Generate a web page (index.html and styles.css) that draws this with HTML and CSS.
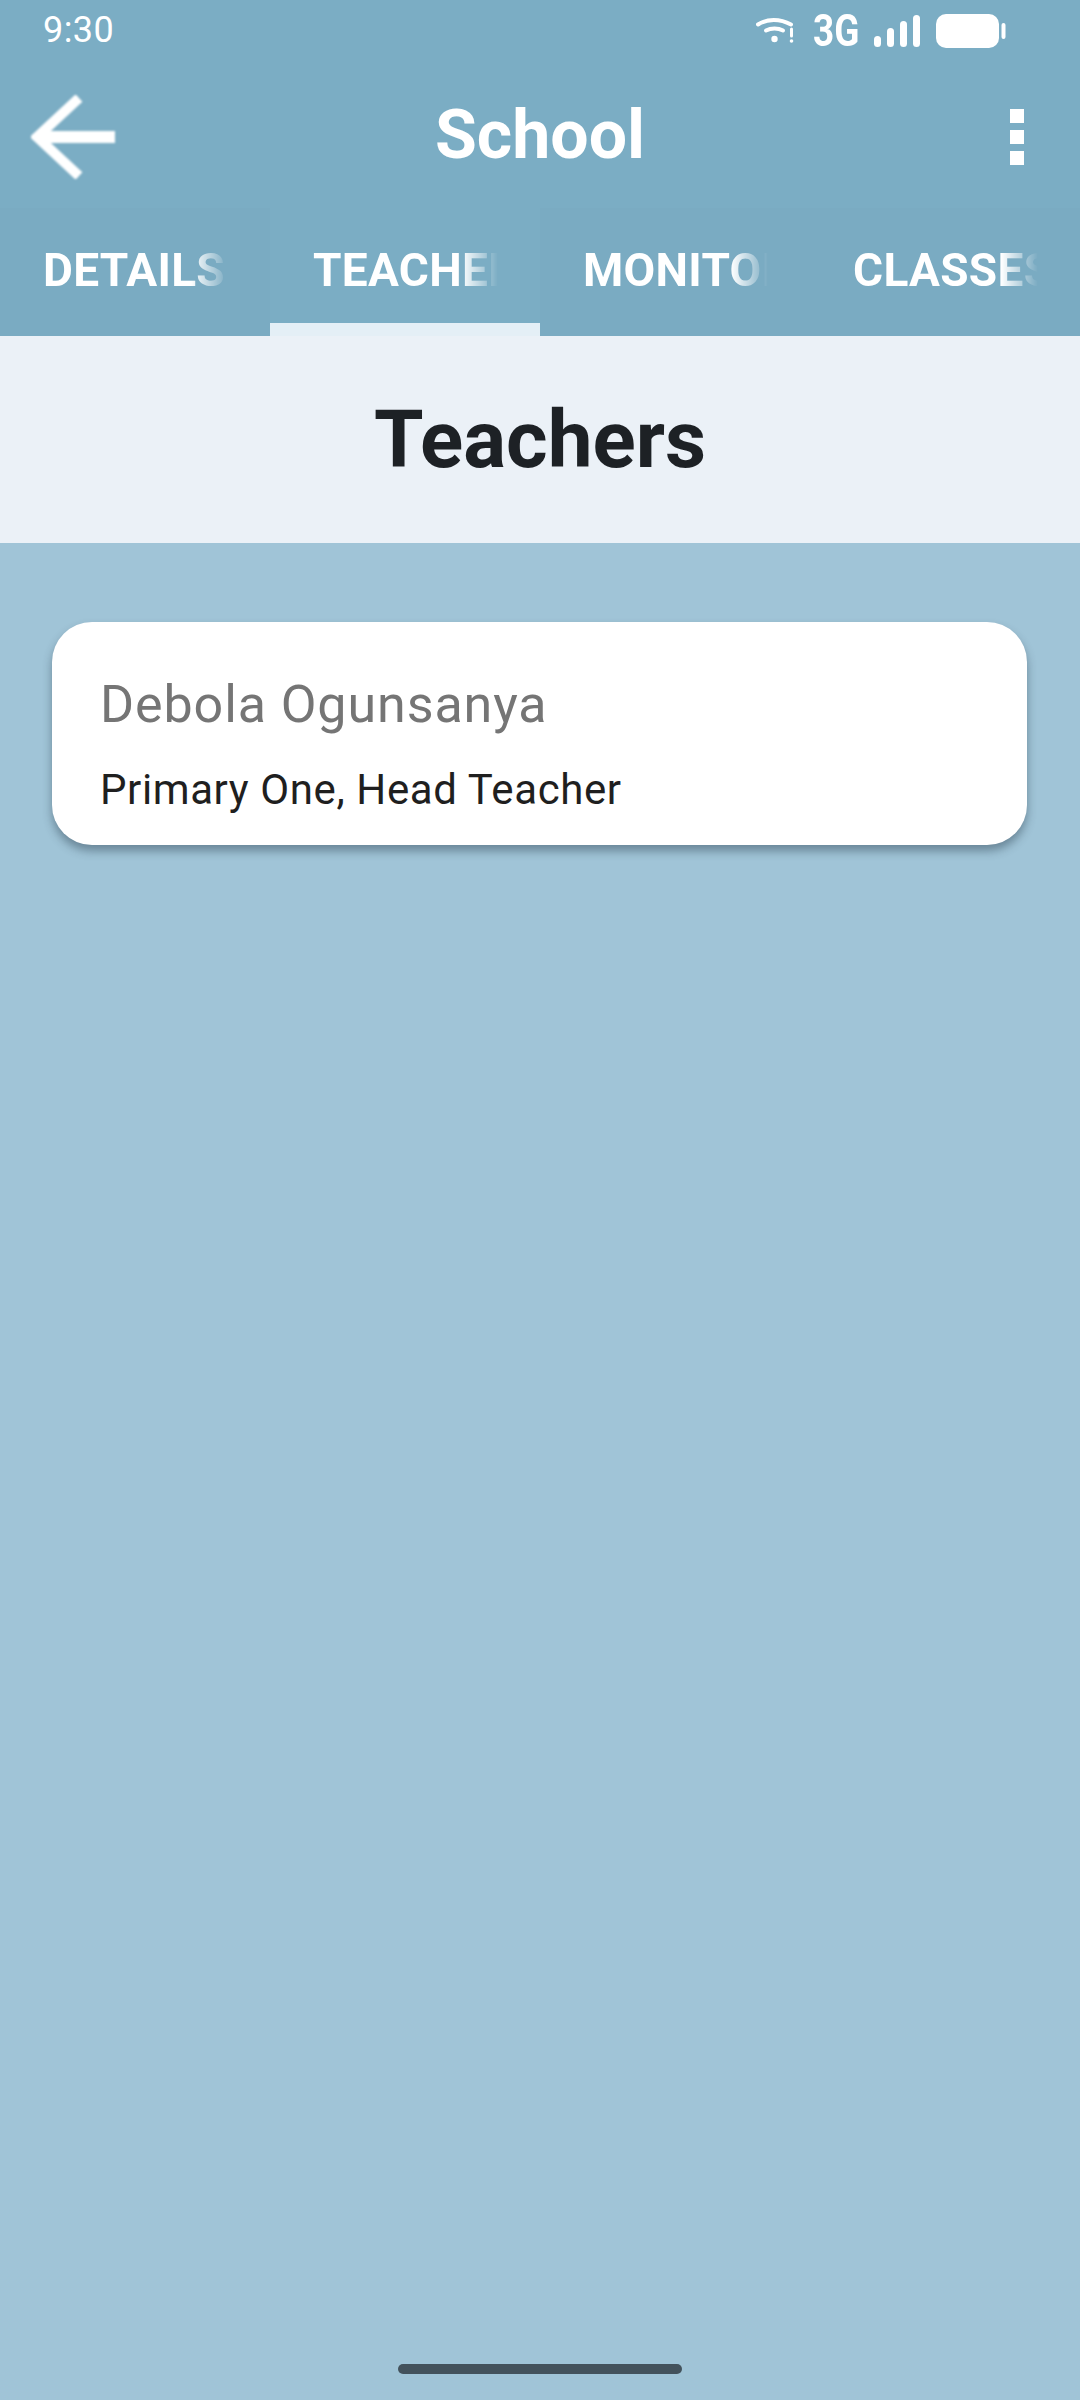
FILE: index.html
```html
<!DOCTYPE html>
<html lang="en">
<head>
<meta charset="utf-8">
<title>School</title>
<link rel="stylesheet" href="styles.css">
</head>
<body>
<div class="screen">
  <header class="top">
    <div class="status">
      <span class="clock">9:30</span>
      <div class="status-icons">
        <svg class="wifi" width="38" height="30" viewBox="0 0 38 30" fill="none" stroke="#fff" stroke-linecap="round">
          <path d="M2 9.500C11 3.500 24 3.500 35 9.500" stroke-width="4"/>
          <path d="M10 15.500C15 12.800 22 12.800 27 15.500" stroke-width="4"/>
          <circle cx="18.500" cy="24" r="3.200" fill="#fff" stroke="none"/>
          <path d="M35.500 14V21" stroke-width="3"/>
          <circle cx="35.500" cy="26" r="1.800" fill="#fff" stroke="none"/>
        </svg>
        <span class="net">3G</span>
        <svg class="signal" width="46" height="32" viewBox="0 0 46 32" fill="#fff">
          <rect x="0" y="21" width="7" height="11" rx="3.500"/>
          <rect x="13" y="13" width="7" height="19" rx="3.500"/>
          <rect x="26" y="6" width="7" height="26" rx="3.500"/>
          <rect x="39" y="0" width="7" height="32" rx="3.500"/>
        </svg>
        <svg class="battery" width="70" height="34" viewBox="0 0 70 34" fill="#fff">
          <rect x="0" y="0" width="63" height="34" rx="10"/>
          <rect x="65.500" y="9" width="4" height="16" rx="2"/>
        </svg>
      </div>
    </div>
    <div class="appbar">
      <svg class="back" width="84" height="84" viewBox="0 0 84 84" fill="none" stroke="#fff" stroke-linejoin="miter">
        <path d="M84 42H8" stroke-width="12"/>
        <path d="M48 3L6 42L48 81" stroke-width="10"/>
      </svg>
      <h1 class="title">School</h1>
      <div class="more"><i></i><i></i><i></i></div>
    </div>
    <nav class="tabs">
      <div class="tab"><span class="tab-label">DETAILS</span></div>
      <div class="tab active"><span class="tab-label">TEACHERS</span></div>
      <div class="tab"><span class="tab-label">MONITORS</span></div>
      <div class="tab"><span class="tab-label">CLASSES</span></div>
    </nav>
  </header>
  <section class="heading"><h2>Teachers</h2></section>
  <main class="content">
    <article class="card">
      <div class="name">Debola Ogunsanya</div>
      <div class="role">Primary One, Head Teacher</div>
    </article>
    <div class="home-bar"></div>
  </main>
</div>
</body>
</html>
```
FILE: styles.css
```css
* { box-sizing: border-box; }
html, body { margin: 0; padding: 0; }
body { width: 1080px; height: 2400px; overflow: hidden; font-family: Roboto, "Liberation Sans", sans-serif; }
.screen { width: 1080px; height: 2400px; display: flex; flex-direction: column; background: #a0c4d7; }
.top { background: #7badc4; color: #fff; }
.status { height: 60px; padding: 14px 74px 0 43px; display: flex; justify-content: space-between; align-items: flex-start; }
.clock { font-size: 36px; line-height: 32px; font-weight: 400; letter-spacing: 0.4px; }
.status-icons { display: flex; align-items: flex-start; }
.wifi { display: block; margin-top: 1px; }
.net { width: 46px; margin-left: 19px; font-size: 45px; line-height: 34px; font-weight: 700; transform: scaleX(0.82); transform-origin: left center; white-space: nowrap; }
.signal { display: block; margin-left: 15px; margin-top: 1px; }
.battery { display: block; margin-left: 16px; }
.appbar { height: 148px; padding: 6px 56px 0 31px; display: flex; align-items: center; justify-content: space-between; position: relative; }
.back { display: block; filter: blur(0.8px); }
.title { position: absolute; left: 0; right: 0; top: 35px; margin: 0; text-align: center; font-size: 68px; line-height: 80px; font-weight: 700; }
.more { display: flex; flex-direction: column; gap: 7px; }
.more i { display: block; width: 14px; height: 14px; background: #fff; }
.tabs { height: 128px; display: flex; background: #7aabc2; }
.tab { width: 270px; padding: 34px 42px 0 43px; height: 128px; font-size: 46px; line-height: 56px; font-weight: 700; }
.tab.active { background: #7badc4; border-bottom: 13px solid #e4eff6; }
.tab-label { display: block; width: 185px; overflow: hidden; white-space: nowrap; letter-spacing: 0.3px; -webkit-mask-image: linear-gradient(to right, #000 80%, transparent 100%); mask-image: linear-gradient(to right, #000 80%, transparent 100%); }
.heading { height: 207px; background: #ebf1f7; display: flex; align-items: center; justify-content: center; }
.heading h2 { margin: 0; font-size: 80px; line-height: 90px; font-weight: 700; color: #1d2125; }
.content { flex: 1; padding: 79px 53px 26px 52px; display: flex; flex-direction: column; }
.card { height: 223px; background: #fff; border-radius: 40px; padding: 53px 48px 0; box-shadow: 0 6px 10px rgba(40, 60, 75, 0.45); }
.name { font-size: 52px; line-height: 60px; font-weight: 400; color: #757575; letter-spacing: 0.9px; }
.role { margin-top: 30px; font-size: 42px; line-height: 50px; font-weight: 400; color: #1f1f1f; letter-spacing: 0.6px; }
.home-bar { margin-top: auto; align-self: center; width: 284px; height: 10px; border-radius: 5px; background: #43525c; }
```
